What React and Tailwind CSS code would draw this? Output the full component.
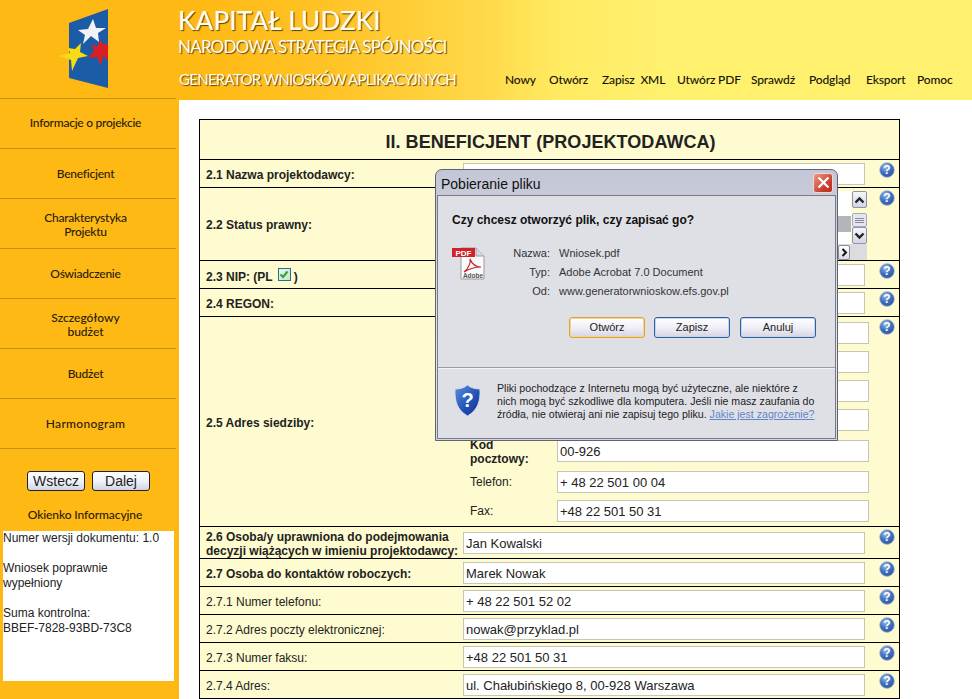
const arial = "font-['Liberation_Sans',Arial,sans-serif]";
const lato = "font-['Lato','Open_Sans',sans-serif]";

function Help() {
  return (
    <svg width="16" height="16" viewBox="0 0 16 16" className="shrink-0">
      <defs>
        <radialGradient id="hg" cx="0.4" cy="0.3" r="0.8">
          <stop offset="0" stopColor="#9fbce8" />
          <stop offset="0.5" stopColor="#3f6fbf" />
          <stop offset="1" stopColor="#2d4f9c" />
        </radialGradient>
      </defs>
      <circle cx="8" cy="8" r="7.4" fill="url(#hg)" stroke="#b9c8d8" strokeWidth="0.8" />
      <text x="8" y="12.2" textAnchor="middle" fontSize="12" fontWeight="700" fill="#fff" fontFamily="Liberation Sans, sans-serif">?</text>
    </svg>
  );
}

function Field({ value, w = "w-[402px]" }) {
  return (
    <div className={`${w} h-[22px] bg-white border border-[#c6c6b4] pl-[2px] pt-[2px] flex items-center text-[13px] text-[#222] whitespace-nowrap overflow-hidden`}>
      {value}
    </div>
  );
}

function Row({ h, label, value, bold, help = "pt-[2px]", top = "items-center" }) {
  return (
    <div className={`${h} flex border-b border-black ${top}`}>
      <div className={`w-[263px] pl-[6px] pr-1 pt-[2px] text-[12px] leading-[14px] text-[#222] ${bold ? "font-bold" : ""}`}>{label}</div>
      <Field value={value} />
      <div className={`ml-[14px] self-start ${help}`}><Help /></div>
    </div>
  );
}

function Sub({ h, label, value, bold }) {
  return (
    <div className={`${h} flex items-start`}>
      <div className={`w-[87px] text-[12px] leading-[14px] text-[#222] ${bold ? "font-bold" : ""}`}>{label}</div>
      <Field value={value} w="w-[312px]" />
    </div>
  );
}

const navItems = [
  ["Nowy", "w-[44px]"], ["Otwórz", "w-[53px]"], ["Zapisz  XML", "w-[75px]"], ["Utwórz PDF", "w-[74px]"],
  ["Sprawdź", "w-[58px]"], ["Podgląd", "w-[57px]"], ["Eksport", "w-[51px]"], ["Pomoc", "w-[45px]"],
];

function Header() {
  return (
    <header className="h-[100px] flex relative bg-[linear-gradient(90deg,#ffb914_0,#ffb914_200px,#ffc428_340px,#ffd848_480px,#ffeb62_560px,#fff06e_660px,#fff06e_100%)]">
      <div className="absolute left-0 bottom-[1px] w-[176px] h-px bg-[#c4900e]" />
      <svg width="60" height="90" viewBox="0 0 60 90" className="ml-[50px] mt-[4px] shrink-0">
        <polygon points="19,19 58,5 58,84 19,74" fill="#1c5ba6" />
        <polygon points="43,15 46,24 56,24 48,29 49,38 41,32 33,40 35,31 28,26 38,25" fill="#f1f2f5" />
        <polygon points="50,36 53,40 58,40 58,56 53,52 51,62 47,53 38,54 44,47 41,40 47,43" fill="#d81f26" />
        <polygon points="31,39 30,48 38,52 28,54 22,67 21,56 9,52 20,49 18,44 25,45" fill="#f7dc14" />
      </svg>
      <div className={`${lato} ml-[68px] w-[327px] shrink-0 text-[#fffdf0] whitespace-nowrap [text-shadow:1px_1px_1px_#5a4408]`}>
        <div className="mt-[4px] text-[26px] leading-[32px] tracking-[0.15px] font-medium">KAPITAŁ LUDZKI</div>
        <div className="mt-[1px] text-[17px] leading-[20px] tracking-[-0.8px]">NARODOWA STRATEGIA SPÓJNOŚCI</div>
        <div className="mt-[12px] ml-[1px] text-[15px] leading-[20px] tracking-[-0.72px]">GENERATOR WNIOSKÓW APLIKACYJNYCH</div>
      </div>
      <nav className={`${lato} flex items-end pb-[13px] text-[12px] font-medium tracking-[-0.15px] text-[#14140a] whitespace-pre`}>
        {navItems.map(([t, w]) => <div key={t} className={`${w} leading-[15px]`}>{t}</div>)}
      </nav>
    </header>
  );
}

const side = [
  ["Informacje o projekcie", "h-[49px] pb-[2px] tracking-[-0.25px]"], ["Beneficjent", "h-[50px] tracking-[-0.25px]"], ["Charakterystyka\nProjektu", "h-[50px] pt-[2px] tracking-[-0.25px]"], ["Oświadczenie", "h-[50px] tracking-[-0.25px]"],
  ["Szczegółowy\nbudżet", "h-[50px] pt-[2px]"], ["Budżet", "h-[50px] tracking-[-0.25px]"], ["Harmonogram", "h-[50px] tracking-[0.3px]"],
];

function XpButton({ children }) {
  return (
    <button className={`${arial} w-[58px] h-[20px] rounded-[3px] border border-[#222] bg-[linear-gradient(180deg,#ffffff,#f2f3f8_50%,#cfd3e6)] text-[14px] leading-none text-[#222]`}>
      {children}
    </button>
  );
}

function Sidebar() {
  return (
    <aside className="w-[179px] shrink-0 bg-[#ffb914]">
      {side.map(([t, h]) => (
        <div key={t} className={`${h} w-[176px] border-b border-[#c4900e] flex items-center justify-center pr-[5px] text-center whitespace-pre-line ${lato} text-[12px] leading-[14px] font-medium text-[#2a2008]`}>
          {t}
        </div>
      ))}
      <div className="flex gap-[7px] pl-[27px] pt-[22px]">
        <XpButton>Wstecz</XpButton>
        <XpButton>Dalej</XpButton>
      </div>
      <div className={`${lato} mt-[16px] pr-[9px] text-center text-[12px] leading-[15px] font-medium tracking-[-0.1px] text-[#2a1c04]`}>Okienko Informacyjne</div>
      <div className={`${arial} mt-[9px] ml-[3px] w-[171px] h-[150px] bg-white text-[12px] leading-[15px] text-[#222] whitespace-nowrap`}>
        Numer wersji dokumentu: 1.0<br /><br />Wniosek poprawnie<br />wypełniony<br /><br />Suma kontrolna:<br />BBEF-7828-93BD-73C8
      </div>
    </aside>
  );
}

function Chevron({ d }) {
  return (
    <svg width="11" height="8" viewBox="0 0 11 8"><path d={d} fill="none" stroke="#222" strokeWidth="2.4" /></svg>
  );
}

function StatusList() {
  const btn = "w-[15px] h-[17px] rounded-[2px] border border-[#8f94a8] bg-[linear-gradient(180deg,#f6f6fa,#d2d5e4)] flex items-center justify-center";
  return (
    <div className="w-[404px] h-[69px] mt-[3px] relative flex flex-col">
      <div className="flex flex-1">
        <div className="flex-1 bg-white relative">
          <div className="absolute left-0 right-0 top-[25px] h-[16px] bg-[#b4b4bc]" />
        </div>
        <div className="w-[16px] flex flex-col items-center">
          <div className={btn}><Chevron d="M1.5 6.5 L5.5 2.5 L9.5 6.5" /></div>
          <div className="w-[15px] h-[14px] mt-[5px] rounded-[2px] border border-[#a8a8b8] bg-[#e4e6f2] flex flex-col items-center justify-center gap-[1px]">
            <span className="block w-[9px] h-px bg-[#8a8a98]" /><span className="block w-[9px] h-px bg-[#8a8a98]" /><span className="block w-[9px] h-px bg-[#8a8a98]" />
          </div>
          <div className={`${btn} mt-[0px]`}><Chevron d="M1.5 1.5 L5.5 5.5 L9.5 1.5" /></div>
        </div>
      </div>
      <div className="h-[16px] bg-[#dcdcdf] pl-[375px] flex items-center">
        <div className="w-[12px] h-[15px] rounded-[2px] border border-[#8a8a98] bg-[linear-gradient(180deg,#fff,#d8dae8)] flex items-center justify-center">
          <svg width="7" height="9" viewBox="0 0 7 9"><path d="M1.5 1 L5 4.5 L1.5 8" fill="none" stroke="#111" strokeWidth="2" /></svg>
        </div>
      </div>
    </div>
  );
}

function Form() {
  return (
    <div className={`${arial} w-[701px] border-l border-r border-t border-black bg-[#fdfbcf]`}>
      <div className="h-[40px] border-b border-black flex items-center justify-center text-[18px] font-bold tracking-[0.05px] text-[#222] pt-[5px] pl-[2px]">II. BENEFICJENT (PROJEKTODAWCA)</div>
      <Row h="h-[28px]" label="2.1 Nazwa projektodawcy:" value="" bold />
      <div className="h-[73px] flex items-start border-b border-black">
        <div className="w-[263px] h-full pl-[6px] pt-[2px] flex items-center text-[12px] font-bold text-[#222]">2.2 Status prawny:</div>
        <StatusList />
        <div className="ml-[12px] pt-[2px]"><Help /></div>
      </div>
      <div className="h-[28px] flex items-center border-b border-black">
        <div className="w-[263px] pl-[6px] pt-[5px] flex items-center text-[12px] font-bold text-[#222]">
          2.3 NIP: (PL
          <span className="mx-[3px] ml-[5px] mb-[5px] w-[13px] h-[13px] border border-[#1f6f9f] bg-[linear-gradient(135deg,#e8f6e0,#c8e8c0)] flex items-center justify-center">
            <svg width="10" height="9" viewBox="0 0 10 9"><path d="M1.5 4.5 L4 7 L8.5 1.5" fill="none" stroke="#2f9e44" strokeWidth="2" /></svg>
          </span>
          )
        </div>
        <Field value="" />
        <div className="ml-[14px] self-start pt-[2px]"><Help /></div>
      </div>
      <Row h="h-[28px]" label="2.4 REGON:" value="" bold />
      <div className="h-[210px] flex border-b border-black">
        <div className="w-[270px] pl-[6px] pt-[2px] flex items-center text-[12px] font-bold text-[#222]">2.5 Adres siedziby:</div>
        <div className="w-[399px] pt-[5px]">
          <Sub h="h-[29px]" label="" value="" />
          <Sub h="h-[29px]" label="" value="" />
          <Sub h="h-[29px]" label="" value="" />
          <Sub h="h-[31px]" label="" value="" />
          <Sub h="h-[31px]" label={<span className="block -mt-[2px]">Kod<br />pocztowy:</span>} value="00-926" bold />
          <Sub h="h-[29px]" label={<span className="block pt-[4px]">Telefon:</span>} value="+ 48 22 501 00 04" />
          <Sub h="h-[26px]" label={<span className="block pt-[4px]">Fax:</span>} value="+48 22 501 50 31" />
        </div>
        <div className="ml-[10px] pt-[2px]"><Help /></div>
      </div>
      <Row h="h-[32px]" label={<>2.6 Osoba/y uprawniona do podejmowania<br />decyzji wiążących w imieniu projektodawcy:</>} value="Jan Kowalski" bold />
      <Row h="h-[28px]" label="2.7 Osoba do kontaktów roboczych:" value="Marek Nowak" bold />
      <Row h="h-[28px]" label="2.7.1 Numer telefonu:" value="+ 48 22 501 52 02" />
      <Row h="h-[28px]" label="2.7.2 Adres poczty elektronicznej:" value="nowak@przyklad.pl" />
      <Row h="h-[28px]" label="2.7.3 Numer faksu:" value="+48 22 501 50 31" />
      <Row h="h-[28px]" label="2.7.4 Adres:" value="ul. Chałubińskiego 8, 00-928 Warszawa" />
    </div>
  );
}

function DlgButton({ children, primary, extra = "" }) {
  return (
    <button className={`${extra} w-[76px] h-[21px] rounded-[3px] border ${primary ? "border-[#d9a441] shadow-[inset_0_0_0_1px_#f6d48a]" : "border-[#2f5f9f] shadow-[inset_0_0_0_1px_#c8d4ee]"} bg-[linear-gradient(180deg,#ffffff,#ecebf4_60%,#d4d4e4)] text-[11px] text-[#222] leading-none`}>
      {children}
    </button>
  );
}

function PdfIcon() {
  return (
    <svg width="33" height="33" viewBox="0 0 33 33" className="shrink-0">
      <path d="M9 1 H24 L32 9 V32 H9 Z" fill="#fafafa" stroke="#9a9aa2" />
      <path d="M24 1 V9 H32" fill="#d8d8de" stroke="#9a9aa2" />
      <rect x="0" y="1" width="23" height="9" fill="#d42027" />
      <text x="11.5" y="8.6" textAnchor="middle" fontSize="8" fontWeight="700" fill="#fff" fontFamily="Liberation Sans, sans-serif">PDF</text>
      <path d="M12 25 C17 21 19 15 18 12 C20 17 24 20 29 20 C23 20 17 22 12 25 Z" fill="none" stroke="#c8202a" strokeWidth="1.2" />
      <text x="21" y="30.5" textAnchor="middle" fontSize="6.5" fontWeight="700" fill="#555" fontFamily="Liberation Sans, sans-serif">Adobe</text>
    </svg>
  );
}

function Shield() {
  return (
    <svg width="27" height="33" viewBox="0 0 27 33" className="shrink-0">
      <defs>
        <linearGradient id="sg" x1="0" y1="0" x2="1" y2="1">
          <stop offset="0" stopColor="#5d8fe0" />
          <stop offset="0.6" stopColor="#1f4fb4" />
          <stop offset="1" stopColor="#123184" />
        </linearGradient>
      </defs>
      <path d="M13.5 1 C17 4 22 5 26 5 C26.5 17 24 26 13.5 32 C3 26 0.5 17 1 5 C5 5 10 4 13.5 1 Z" fill="url(#sg)" stroke="#d8dce8" />
      <text x="13.5" y="23" textAnchor="middle" fontSize="20" fontWeight="700" fill="#fff" fontFamily="Liberation Sans, sans-serif">?</text>
    </svg>
  );
}

function Dialog() {
  return (
    <div className={`${arial} absolute left-[435px] top-[169px] w-[403px] h-[272px] rounded-t-[7px] border border-[#5f6270] bg-[linear-gradient(180deg,#c3c6d6,#e6e7ec_70%,#d6d7de)] px-[1px] pb-[1px] flex flex-col`}>
      <div className="h-[25px] shrink-0 flex items-center justify-between pl-[4px] pr-[3px]">
        <span className="text-[14px] text-[#111] pt-[4px]">Pobieranie pliku</span>
        <div className="w-[20px] h-[20px] rounded-[3px] border border-[#f0d8d0] bg-[linear-gradient(135deg,#e89a86,#c83a2c_70%,#b8301f)] flex items-center justify-center">
          <svg width="13" height="13" viewBox="0 0 13 13"><path d="M1.5 1.5 L11.5 11.5 M11.5 1.5 L1.5 11.5" stroke="#fff" strokeWidth="2.2" /></svg>
        </div>
      </div>
      <div className="flex-1 border border-[#787a88] bg-[#dfe0e6] flex flex-col">
        <div className="h-[172px] border-b border-[#9a9ca8] shadow-[0_1px_0_#f2f2f6] pl-[14px] pt-[17px]">
          <div className="text-[12px] leading-[15px] font-bold text-[#111]">Czy chcesz otworzyć plik, czy zapisać go?</div>
          <div className="flex mt-[19px]">
            <PdfIcon />
            <div className="ml-[5px] mt-[-3px] text-[11px] leading-[19px] text-[#333]">
              {[["Nazwa:", "Wniosek.pdf"], ["Typ:", "Adobe Acrobat 7.0 Document"], ["Od:", "www.generatorwnioskow.efs.gov.pl"]].map(([a, b]) => (
                <div key={a} className="flex whitespace-nowrap">
                  <span className="w-[60px] text-right">{a}</span>
                  <span className="ml-[9px]">{b}</span>
                </div>
              ))}
            </div>
          </div>
          <div className="flex gap-[9px] pl-[117px] mt-[16px]">
            <DlgButton primary>Otwórz</DlgButton>
            <DlgButton>Zapisz</DlgButton>
            <DlgButton extra="ml-[1px]">Anuluj</DlgButton>
          </div>
        </div>
        <div className="flex pl-[16px] pt-[16px]">
          <Shield />
          <div className="ml-[16px] -mt-[2px] text-[10.6px] leading-[13px] text-[#222] whitespace-nowrap">
            Pliki pochodzące z Internetu mogą być użyteczne, ale niektóre z<br />
            nich mogą być szkodliwe dla komputera. Jeśli nie masz zaufania do<br />
            źródła, nie otwieraj ani nie zapisuj tego pliku. <span className="text-[#5f86c8] underline">Jakie jest zagrożenie?</span>
          </div>
        </div>
      </div>
    </div>
  );
}

export default function App() {
  return (
    <div className="relative w-[972px] h-[699px] overflow-hidden bg-white">
      <Header />
      <div className="flex h-[599px]">
        <Sidebar />
        <main className="flex-1 pl-[20px] pt-[19px]">
          <Form />
        </main>
      </div>
      <Dialog />
    </div>
  );
}
